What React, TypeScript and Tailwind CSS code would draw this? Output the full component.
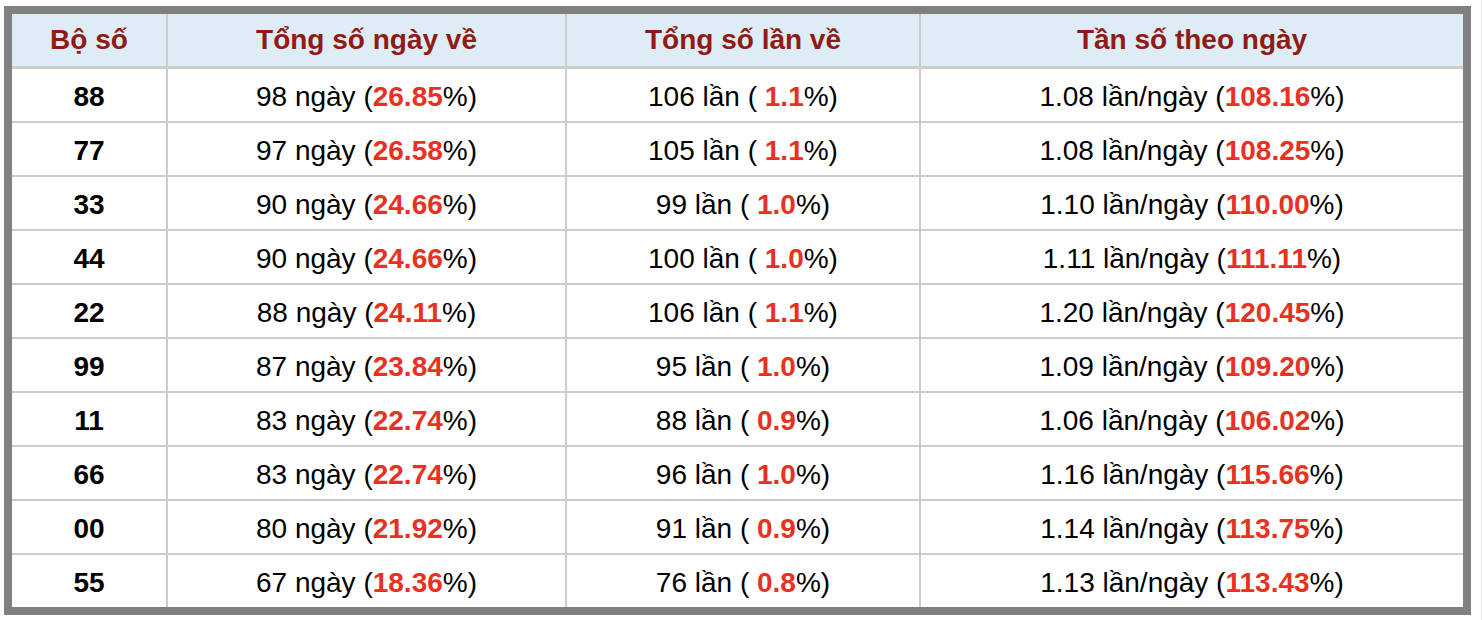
import React from 'react';

const rows = [
  { bo: '88', days: '98', dayPct: '26.85', times: '106', timePct: '1.1', freq: '1.08', freqPct: '108.16' },
  { bo: '77', days: '97', dayPct: '26.58', times: '105', timePct: '1.1', freq: '1.08', freqPct: '108.25' },
  { bo: '33', days: '90', dayPct: '24.66', times: '99', timePct: '1.0', freq: '1.10', freqPct: '110.00' },
  { bo: '44', days: '90', dayPct: '24.66', times: '100', timePct: '1.0', freq: '1.11', freqPct: '111.11' },
  { bo: '22', days: '88', dayPct: '24.11', times: '106', timePct: '1.1', freq: '1.20', freqPct: '120.45' },
  { bo: '99', days: '87', dayPct: '23.84', times: '95', timePct: '1.0', freq: '1.09', freqPct: '109.20' },
  { bo: '11', days: '83', dayPct: '22.74', times: '88', timePct: '0.9', freq: '1.06', freqPct: '106.02' },
  { bo: '66', days: '83', dayPct: '22.74', times: '96', timePct: '1.0', freq: '1.16', freqPct: '115.66' },
  { bo: '00', days: '80', dayPct: '21.92', times: '91', timePct: '0.9', freq: '1.14', freqPct: '113.75' },
  { bo: '55', days: '67', dayPct: '18.36', times: '76', timePct: '0.8', freq: '1.13', freqPct: '113.43' },
];

const cols = 'grid grid-cols-[156px_399px_354px_542px]';
const Red: React.FC<{ children: React.ReactNode }> = ({ children }) => (
  <span className="font-bold text-[#e8311f]">{children}</span>
);

export default function App() {
  return (
    <div
      className="w-[1482px] h-[620px] bg-white border-r border-[#e3e3e3] pl-[4px] pt-[6px]"
      style={{ fontFamily: '"Liberation Sans", Arial, sans-serif' }}
    >
      <div className="w-[1467px] border-8 border-[#808080] bg-white text-[28px] text-black">
        <div className={`${cols} h-[55px] bg-[#ddecf5] border-b-[3px] border-[#cccccc] font-bold text-[#921a14]`}>
          <div className="flex items-center justify-center border-r-2 border-[#cccccc]">Bộ số</div>
          <div className="flex items-center justify-center border-r-2 border-[#cccccc]">Tổng số ngày về</div>
          <div className="flex items-center justify-center border-r-2 border-[#cccccc]">Tổng số lần về</div>
          <div className="flex items-center justify-center">Tần số theo ngày</div>
        </div>
        {rows.map((r, i) => (
          <div
            key={r.bo}
            className={`${cols} ${i < rows.length - 1 ? 'h-[54px] border-b-2' : 'h-[52px]'} border-[#cccccc]`}
          >
            <div className="flex items-center justify-center pt-[3px] border-r-2 border-[#cccccc] font-bold">{r.bo}</div>
            <div className="flex items-center justify-center pt-[3px] border-r-2 border-[#cccccc] whitespace-pre">
              {r.days} ngày (<Red>{r.dayPct}</Red>%)
            </div>
            <div className="flex items-center justify-center pt-[3px] border-r-2 border-[#cccccc] whitespace-pre">
              {r.times} lần ( <Red>{r.timePct}</Red>%)
            </div>
            <div className="flex items-center justify-center pt-[3px] whitespace-pre">
              {r.freq} lần/ngày (<Red>{r.freqPct}</Red>%)
            </div>
          </div>
        ))}
      </div>
    </div>
  );
}
